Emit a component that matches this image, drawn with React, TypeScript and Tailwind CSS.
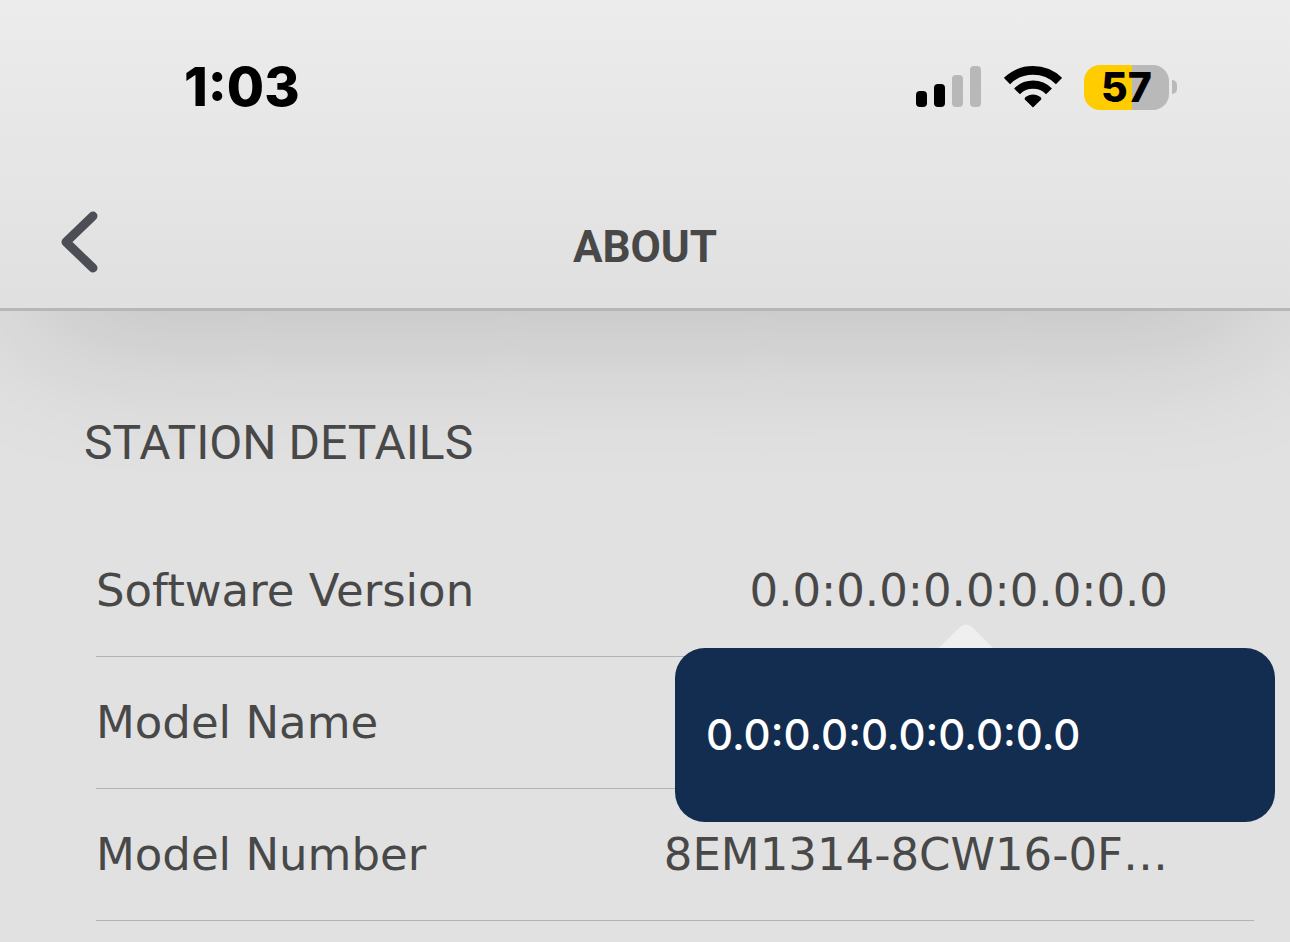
interface IDetail {
  label: string;
  value?: string;
  tooltip?: string;
}

const details: IDetail[] = [
  {
    label: "Software Version",
    value: "0.0:0.0:0.0:0.0:0.0",
    tooltip: "0.0:0.0:0.0:0.0:0.0",
  },
  { label: "Model Name" },
  { label: "Model Number", value: "8EM1314-8CW16-0F…" },
];

const SignalIcon = () => (
  <svg width="66" height="42" viewBox="0 0 66 42" aria-hidden="true">
    <rect x="0" y="25" width="11" height="16" rx="4" fill="#000" />
    <rect x="18" y="18" width="11" height="23" rx="4" fill="#000" />
    <rect x="36" y="9" width="11" height="32" rx="4" fill="#b8b8b8" />
    <rect x="54" y="0" width="11" height="41" rx="4" fill="#b8b8b8" />
  </svg>
);

const WifiIcon = () => (
  <svg width="58" height="42" viewBox="0 0 58 42" aria-hidden="true">
    <g fill="none" stroke="#000">
      <path d="M3 15A37.3 37.3 0 0 1 55 15" strokeWidth="8.8" />
      <path d="M13 25.4A22.4 22.4 0 0 1 45 25.4" strokeWidth="8.2" />
    </g>
    <path d="M29 41.500L20.6 33.2Q20.600 31.6 22 30.7A13 13 0 0 1 36 30.7Q37.400 31.6 37.400 33.2Z" />
  </svg>
);

const Battery = ({ level }: { level: number }) => (
  <div className="flex items-center gap-[3px]">
    <div
      className="flex h-[45px] w-[85px] items-center justify-center rounded-2xl text-[41px] leading-[45px] font-extrabold"
      style={{
        backgroundImage: `linear-gradient(to right, #ffcc00 ${level}%, #b9b9b9 ${level}%)`,
      }}
    >
      {level}
    </div>
    <div className="h-[14px] w-[5px] rounded-r-full bg-[#b9b9b9]" />
  </div>
);

const StatusBar = () => (
  <div className="flex h-[174px] items-center justify-between pr-[113px] pl-[184px] font-['Inter',sans-serif] text-black">
    <span className="text-[54px] leading-[60px] font-extrabold">1:03</span>
    <div className="flex items-center gap-[22px]">
      <SignalIcon />
      <WifiIcon />
      <Battery level={57} />
    </div>
  </div>
);

const Tooltip = ({ text }: { text: string }) => (
  <div
    role="tooltip"
    className="absolute top-[99px] right-[-21px] z-10 w-[600px]"
  >
    <svg
      className="ml-[264px] block"
      width="54"
      height="24"
      viewBox="0 0 54 24"
      aria-hidden="true"
    >
      <path d="M0 24L20 4Q27 -3 34 4L54 24Z" fill="#efefef" />
    </svg>
    <div className="flex h-[174px] items-center rounded-[30px] bg-[#132d50] px-[31px] font-['Inter',sans-serif] text-[42px] leading-[48px] font-medium text-white">
      {text}
    </div>
  </div>
);

const DetailRow = ({ label, value, tooltip }: IDetail) => (
  <div className="relative flex h-[132px] items-center justify-between border-b border-[#b3b3b3] pr-[86px]">
    <dt>{label}</dt>
    <dd>{value}</dd>
    {tooltip && <Tooltip text={tooltip} />}
  </div>
);

const App = () => {
  return (
    <div className="min-h-screen overflow-hidden bg-[#e1e1e1] text-[#484848]">
      <header className="relative border-b-[3px] border-[#b7b7b7] bg-linear-to-b from-[#ececec] to-[#e0e0e0] shadow-[0_45px_150px_-25px_rgba(0,0,0,0.16)]">
        <StatusBar />
        <div className="grid h-[134px] grid-cols-[1fr_auto_1fr] items-center px-[60px]">
          <button type="button" aria-label="Back" className="justify-self-start">
            <svg width="38" height="64" viewBox="0 0 38 64" fill="none">
              <path
                d="M33 7L6 33L33 59"
                stroke="#4c4d55"
                strokeWidth="9"
                strokeLinecap="round"
                strokeLinejoin="round"
              />
            </svg>
          </button>
          <h1 className="pt-3 font-['Roboto',sans-serif] text-[44px] leading-[52px] font-bold">
            ABOUT
          </h1>
        </div>
      </header>
      <main className="relative pt-[102px] pr-9 pl-24">
        <h2 className="-ml-3 font-['Roboto',sans-serif] text-[48px] leading-[60px]">
          STATION DETAILS
        </h2>
        <dl className="mt-[52px] font-['DejaVu_Sans',sans-serif] text-[45px] leading-[54px]">
          {details.map((detail) => (
            <DetailRow key={detail.label} {...detail} />
          ))}
        </dl>
      </main>
    </div>
  );
};

export default App;
